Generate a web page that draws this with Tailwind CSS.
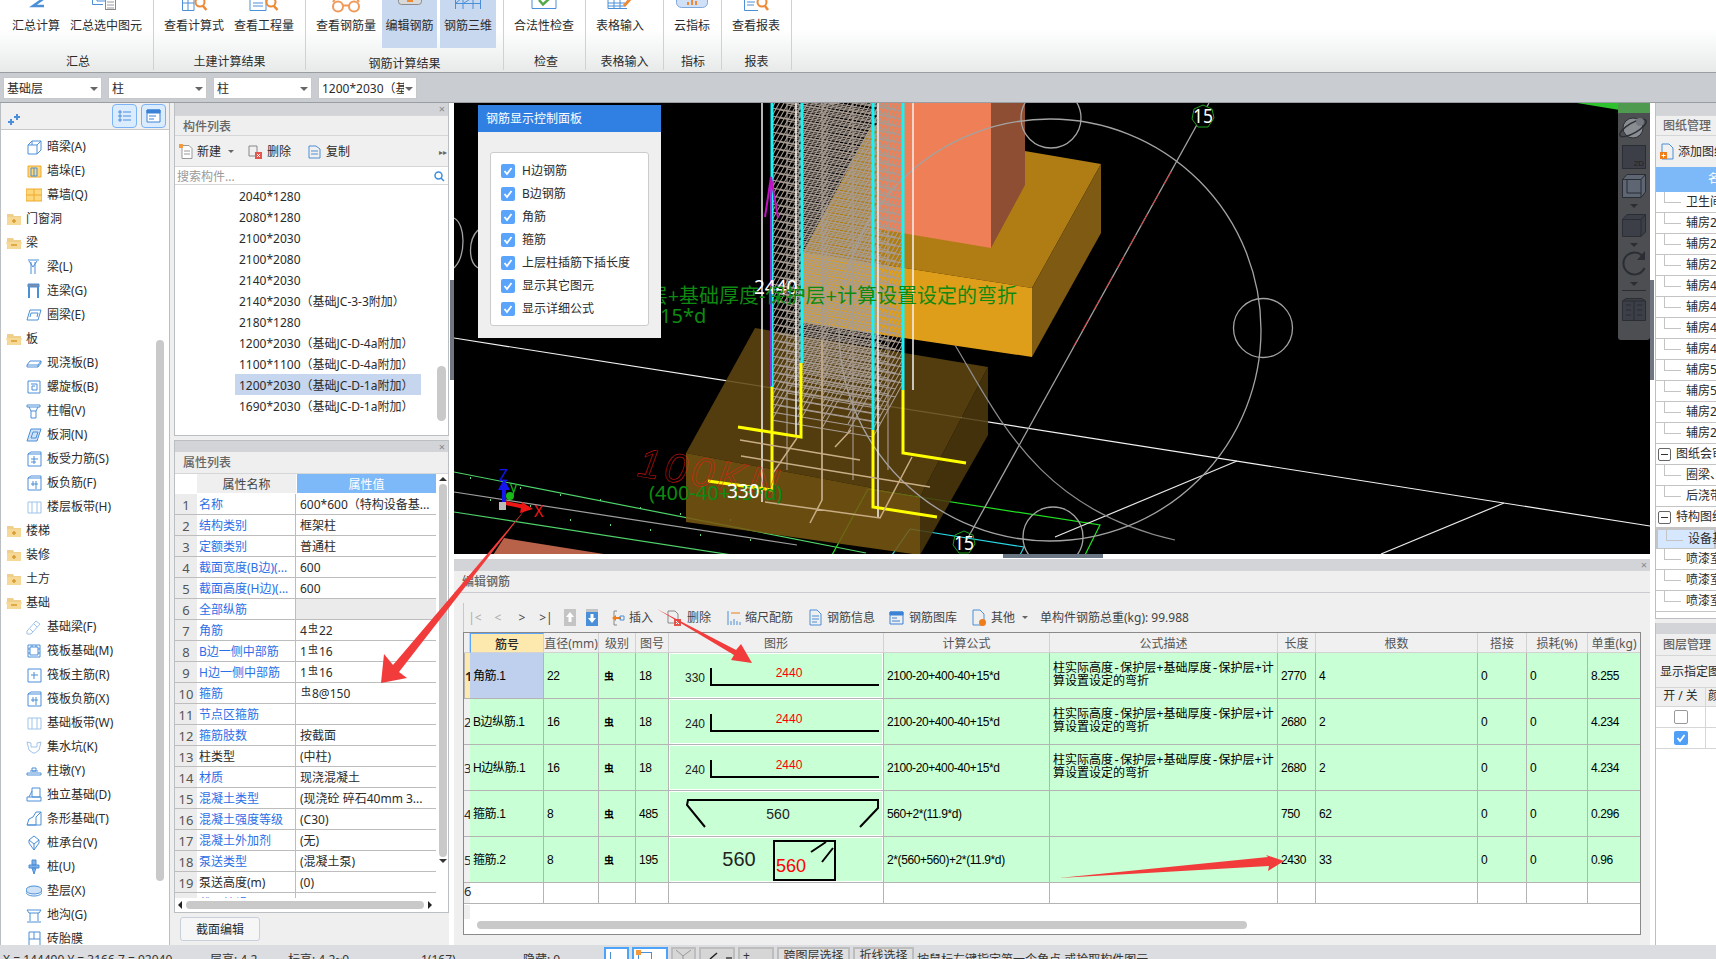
<!DOCTYPE html>
<html lang="zh">
<head>
<meta charset="UTF-8" />
<title>钢筋三维</title>
<script src="https://cdn.jsdelivr.net/npm/@tailwindcss/browser@4"></script>
</head>
<body class="bg-[#dfe0e3]">
<div class="relative w-[1716px] h-[959px] overflow-hidden flex flex-col text-[12px] leading-[16px] text-[#2b2b2b] font-['Noto_Sans','Noto_Sans_CJK_SC',sans-serif]">

  <!-- Ribbon -->
  <header class="h-[73px] flex bg-linear-to-b from-white from-40% to-[#e8eaea] border-b border-[#9a9da2] shrink-0">
    <div class="w-[154px] h-[70px] border-r border-[#cfd2d4] flex flex-col">
      <div class="h-[48px] flex pl-[1px]">
        <div class="w-[70px] flex flex-col items-center"><svg class="w-[30px] h-[18px] shrink-0" viewBox="0 0 30 18" fill="none"><path d="M6 -5H22V-1L12 6H23" stroke="#4a8fd8" stroke-width="2.5"/></svg><span>汇总计算</span></div>
        <div class="w-[70px] flex flex-col items-center"><svg class="w-[30px] h-[18px] shrink-0" viewBox="0 0 30 18" fill="none" stroke="#4a8fd8"><path d="M1.5 -5V4.500H12M6 -3V1H14"/><rect x="14.500" y="-2" width="10" height="11.500" stroke="#888" fill="#fff"/><path d="M16 2h7M16 5h7M16 8h7" stroke="#999"/></svg><span class="whitespace-nowrap">汇总选中图元</span></div>
      </div>
      <div class="mt-[8px] text-center pl-[3px]">汇总</div>
    </div>
    <div class="w-[152px] h-[70px] border-r border-[#cfd2d4] flex flex-col">
      <div class="h-[48px] flex pl-[5px]">
        <div class="w-[70px] flex flex-col items-center"><svg class="w-[30px] h-[18px] shrink-0" viewBox="0 0 30 18" fill="none"><path d="M3.500 -3V10.500H15V-3M9 -3V10.500M3.500 3H15" stroke="#4a8fd8"/><circle cx="21" cy="2" r="4.500" stroke="#ee8a35" stroke-width="2"/><path d="M24 6l3.500 4" stroke="#ee8a35" stroke-width="2.500"/></svg><span>查看计算式</span></div>
        <div class="w-[70px] flex flex-col items-center"><svg class="w-[30px] h-[18px] shrink-0" viewBox="0 0 30 18" fill="none"><path d="M1 -3V10.500H17V-3M4 3H14M4 6H14" stroke="#4a8fd8"/><circle cx="22" cy="2" r="4.500" stroke="#ee8a35" stroke-width="2"/><path d="M25 6l3.500 4" stroke="#ee8a35" stroke-width="2.500"/></svg><span>查看工程量</span></div>
      </div>
      <div class="mt-[8px] text-center">土建计算结果</div>
    </div>
    <div class="w-[198px] h-[70px] border-r border-[#cfd2d4] flex flex-col">
      <div class="h-[48px] flex pl-[4px]">
        <div class="w-[72px] flex flex-col items-center"><svg class="w-[32px] h-[18px] shrink-0" viewBox="0 0 32 18" fill="none" stroke="#ef9a5b" stroke-width="2"><circle cx="8" cy="6.500" r="5"/><circle cx="24" cy="6.500" r="5"/><path d="M13 5.500h6M3 2L5 -1M29 2L27 -1"/></svg><span>查看钢筋量</span></div>
        <div class="w-[55px] h-[48px] bg-[#c8d8ef] flex flex-col items-center"><svg class="w-[30px] h-[18px] shrink-0" viewBox="0 0 30 18" fill="none"><rect x="3.500" y="-6" width="23" height="10.500" rx="3" stroke="#8b8b8b" fill="#d9d9d9"/><path d="M12 1h6" stroke="#ee8a35" stroke-width="2"/></svg><span>编辑钢筋</span></div>
        <div class="ml-[3px] w-[56px] h-[48px] bg-[#c8d8ef] flex flex-col items-center"><svg class="w-[30px] h-[18px] shrink-0" viewBox="0 0 30 18" fill="none" stroke="#4a8fd8"><path d="M2.500 -2V9M27.500 -2V9M2.500 3.500H27.500M10 -2V9M20 -2V9M3 3L9 -2M11 3L19 -2"/></svg><span>钢筋三维</span></div>
      </div>
      <div class="mt-[8px] text-center">钢筋计算结果</div>
    </div>
    <div class="w-[82px] h-[70px] border-r border-[#cfd2d4] flex flex-col">
      <div class="h-[48px] flex flex-col items-center pr-[1px]"><svg class="w-[30px] h-[18px] shrink-0" viewBox="0 0 30 18" fill="none"><path d="M3 -2V8.500H27V-2" stroke="#4a8fd8"/><path d="M10 0L14 4.500L21 -2" stroke="#55a84a" stroke-width="2.500"/></svg><span>合法性检查</span></div>
      <div class="mt-[8px] text-center pl-[3px]">检查</div>
    </div>
    <div class="w-[78px] h-[70px] border-r border-[#cfd2d4] flex flex-col">
      <div class="h-[48px] w-[68px] flex flex-col items-center"><svg class="w-[30px] h-[18px] shrink-0" viewBox="0 0 30 18" fill="none"><path d="M3 -2V8.500H22M3 3H20M3 6H20M9 -2V8.500M15 -2V8.500" stroke="#4a8fd8"/><path d="M19 6L27 -3" stroke="#ee8a35" stroke-width="3"/></svg><span>表格输入</span></div>
      <div class="mt-[8px] text-center">表格输入</div>
    </div>
    <div class="w-[58px] h-[70px] border-r border-[#cfd2d4] flex flex-col">
      <div class="h-[48px] w-[56px] flex flex-col items-center"><svg class="w-[32px] h-[18px] shrink-0" viewBox="0 0 32 18" fill="none"><rect x="0.500" y="-7" width="31" height="14.500" rx="5" fill="#cfe0f7" stroke="#7ea9dd"/><path d="M12 5V2M16 5V-2M20 5V1" stroke="#ee8a35" stroke-width="2"/></svg><span>云指标</span></div>
      <div class="mt-[8px] text-center pl-[1px]">指标</div>
    </div>
    <div class="w-[70px] h-[70px] border-r border-[#cfd2d4] flex flex-col">
      <div class="h-[48px] w-[68px] flex flex-col items-center"><svg class="w-[30px] h-[18px] shrink-0" viewBox="0 0 30 18" fill="none"><path d="M3.500 -3V10.500H17M6 2H14M6 5H13" stroke="#4a8fd8"/><circle cx="21" cy="2" r="4.500" stroke="#ee8a35" stroke-width="2"/><path d="M24 6l3 4" stroke="#ee8a35" stroke-width="2.500"/></svg><span>查看报表</span></div>
      <div class="mt-[8px] text-center">报表</div>
    </div>
  </header>

  <!-- Selectors -->
  <div class="h-[30px] shrink-0 bg-[#c9ccd1] border-b border-[#9a9da2] flex gap-[6px] pl-[3px] pt-[4px]">
    <div class="w-[99px] h-[22px] bg-white border border-[#c6c8ca] flex items-center justify-between px-[3px] pt-[1px]"><span>基础层</span><span class="w-0 h-0 border-x-[4px] border-x-transparent border-t-[4px] border-t-[#666]"></span></div>
    <div class="w-[99px] h-[22px] bg-white border border-[#c6c8ca] flex items-center justify-between px-[3px] pt-[1px]"><span>柱</span><span class="w-0 h-0 border-x-[4px] border-x-transparent border-t-[4px] border-t-[#666]"></span></div>
    <div class="w-[99px] h-[22px] bg-white border border-[#c6c8ca] flex items-center justify-between px-[3px] pt-[1px]"><span>柱</span><span class="w-0 h-0 border-x-[4px] border-x-transparent border-t-[4px] border-t-[#666]"></span></div>
    <div class="w-[99px] h-[22px] bg-white border border-[#c6c8ca] flex items-center justify-between px-[3px] pt-[1px] overflow-hidden"><span class="whitespace-nowrap w-[82px] overflow-hidden">1200*2030&#65288;基础</span><span class="w-0 h-0 border-x-[4px] border-x-transparent border-t-[4px] border-t-[#666]"></span></div>
  </div>

  <!-- Main -->
  <main class="h-[842px] flex bg-[#efefef]">

    <!-- Module tree -->
    <aside class="relative w-[170px] shrink-0 bg-white border-x border-[#bcbfc2] overflow-hidden">
      <div class="h-[27px] bg-[#f0f0f0] border-b border-[#c8c8c8] flex items-center pl-[6px]">
        <svg class="w-[14px] h-[14px] mt-[6px]" viewBox="0 0 14 14" fill="#4a8fd8"><path d="M3 7h2v2h2v2H5v2H3v-2H1V9h2zM9 2h2v2h2v2h-2v2H9V6H7V4h2z"/></svg>
        <div class="ml-[91px] w-[25px] h-[24px] rounded-[4px] border border-[#7ab3f5] bg-[#dcecff] flex items-center justify-center"><svg class="w-[14px] h-[14px]" viewBox="0 0 14 14" fill="none" stroke="#4a8fd8"><path d="M1 2h2v2H1zM1 6h2v2H1zM1 10h2v2H1zM5 3h8M5 7h8M5 11h8"/></svg></div>
        <div class="ml-[4px] w-[25px] h-[24px] rounded-[4px] border border-[#7ab3f5] bg-[#dcecff] flex items-center justify-center"><svg class="w-[15px] h-[14px]" viewBox="0 0 15 14" fill="none" stroke="#3b82d6"><path d="M1 1h13v12H1z" fill="#fff"/><path d="M1 1h13v3H1z" fill="#3b82d6"/><path d="M3 7h7M3 10h5"/></svg></div>
      </div>
      <div id="tree" class="pt-[5px]"></div>
      <div class="absolute left-[155px] top-[237px] w-[8px] h-[541px] rounded-full bg-[#c9c9c9]"></div>
    </aside>

    <div class="w-[4px] shrink-0"></div>

    <!-- Component + attribute lists -->
    <section class="w-[275px] shrink-0 flex flex-col">
      <div class="h-[333px] border border-t-0 border-[#bcbfc2] bg-white relative overflow-hidden">
        <div class="h-[12px] bg-[#d2d4d8] flex items-center justify-end pr-[3px] text-[11px] leading-[12px] text-[#888]">×</div>
        <div class="h-[21px] bg-[#efefef] border-y border-[#d4d6d8] pl-[8px] text-[#666] font-medium leading-[22px]">构件列表</div>
        <div class="h-[30px] bg-[#f0f0f0] flex items-center relative pt-[1px]">
          <svg class="ml-[4px] w-[14px] h-[15px]" viewBox="0 0 14 15" fill="none" stroke="#999"><path d="M3 1.500h7l3 3v10H3z" fill="#fff"/><path d="M5 7h6M5 10h6"/><path d="M0 0h4v4H0z" fill="#f59a3c" stroke="none"/></svg>
          <span class="ml-[4px] w-[25px]">新建</span><span class="ml-[6px] w-0 h-0 border-x-[3px] border-x-transparent border-t-[3px] border-t-[#666]"></span>
          <svg class="ml-[14px] w-[14px] h-[14px]" viewBox="0 0 14 14" fill="none" stroke="#888"><path d="M1 1h8v10H1z"/><path d="M7 7h7v7H7z" fill="#e2564d" stroke="none"/><path d="M9 9l3 3M12 9l-3 3" stroke="#fff"/></svg>
          <span class="ml-[5px] w-[25px]">删除</span>
          <svg class="ml-[16px] w-[13px] h-[14px]" viewBox="0 0 13 14" fill="none" stroke="#4a8fd8"><path d="M1 1h7l4 3v9H1z"/><path d="M3 6h7M3 9h7"/></svg>
          <span class="ml-[5px]">复制</span>
          <span class="absolute right-[1px] text-[8px] text-[#666]">▸▸</span>
        </div>
        <div class="h-[19px] border-y border-[#d4d6d8] flex items-center justify-between px-[2px] text-[#9a9a9a] pt-[2px]"><span>搜索构件...</span><svg class="w-[11px] h-[11px] mr-[1px]" viewBox="0 0 11 11" fill="none" stroke="#3a8ee0" stroke-width="1.500"><circle cx="4.500" cy="4.500" r="3.500"/><path d="M7 7l3 3"/></svg></div>
        <div id="parts"></div>
        <div class="absolute left-[262px] top-[263px] w-[9px] h-[55px] rounded-full bg-[#c9c9c9]"></div>
      </div>
      <div class="h-[4px] shrink-0"></div>
      <div class="h-[473px] border border-[#bcbfc2] bg-white relative overflow-hidden">
        <div class="h-[11px] bg-[#d2d4d8] flex items-center justify-end pr-[3px] text-[11px] leading-[11px] text-[#888]">×</div>
        <div class="h-[22px] bg-[#efefef] border-b border-[#d4d6d8] pl-[8px] text-[#666] font-medium leading-[22px]">属性列表</div>
        <div class="flex h-[20px] border-b border-white">
          <div class="w-[22px]"></div>
          <div class="w-[99px] bg-[#efefef] text-center leading-[21px] text-[#444]">属性名称</div>
          <div class="w-[139px] bg-[#7db9f8] text-center leading-[21px] text-white ml-[1px]">属性值</div>
        </div>
        <div id="attrs" class="w-[261px] h-[405px] overflow-hidden"></div>
        <div class="absolute left-[262px] top-[33px] w-[12px] h-[392px] flex flex-col items-center">
          <span class="w-0 h-0 mt-[3px] border-x-[4px] border-x-transparent border-b-[4px] border-b-[#333]"></span>
          <span class="mt-[3px] w-[8px] h-[373px] rounded-full bg-[#c9c9c9]"></span>
          <span class="w-0 h-0 mt-[2px] border-x-[4px] border-x-transparent border-t-[4px] border-t-[#333]"></span>
        </div>
        <div class="absolute left-0 bottom-0 w-[273px] h-[14px] bg-white flex items-center pl-[3px]">
          <span class="w-0 h-0 border-y-[4px] border-y-transparent border-r-[4px] border-r-[#222]"></span>
          <span class="ml-[4px] w-[238px] h-[8px] rounded-full bg-[#c9c9c9]"></span>
          <span class="ml-[4px] w-0 h-0 border-y-[4px] border-y-transparent border-l-[4px] border-l-[#222]"></span>
        </div>
      </div>
      <div class="flex-1 pl-[6px] pt-[4px]"><div class="w-[80px] h-[24px] rounded-[3px] border border-[#c8d0dc] bg-[#f6f6f6] text-center leading-[23px]">截面编辑</div></div>
    </section>

    <div class="relative w-[5px] shrink-0 bg-white"><div class="absolute left-[1px] top-[177px] w-[4px] h-[100px] bg-[#6f7681]"></div></div>

    <!-- Centre: 3D viewport and rebar table -->
    <section class="w-[1196px] shrink-0 flex flex-col">
      <div class="relative h-[451px] bg-black overflow-hidden">
        <svg class="absolute inset-0 w-[1196px] h-[451px]" viewBox="454 103 1196 451" fill="none" font-family="'Noto Sans','Noto Sans CJK SC',sans-serif">
          <defs>
            <path id="stirrup" d="M772 420L802 367L903 383L873 437ZM787 393L888 410M853 375L822 428M780 406L881 423M795 380L896 397M828 372L798 424M878 379L848 432"/>
          </defs>
          <path d="M1577 103H1650V115Z" fill="#2fc22f"/>
          <path d="M493 555L504 538L610 555Z" fill="#b8624a"/>
          <!-- ground lines -->
          <g stroke-width="1.200">
            <path d="M454 338L1650 526" stroke="#f2f2f2"/>
            <path d="M454 472L866 553" stroke="#4fd36a"/>
            <path d="M454 512L732 555" stroke="#4fd36a"/>
            <path d="M454 492L797 545" stroke="#9f9f9f"/>
            <path d="M868 489L1100 525L1085 555M868 489L832 555" stroke="#22e022"/>
            <path d="M910 529L1024 547L1020 555M910 529L892 555" stroke="#29d8e6"/>
            <path d="M1237 461L1055 537M1504 503L1381 554" stroke="#e8e8e8"/>
          </g>
          <path d="M470 478h1M490 500h1M520 488h1M530 506h1M560 495h1M570 520h1M600 500h1M610 525h1M640 508h1M650 530h1M680 514h1M700 535h1M730 520h1M750 540h1" stroke="#5fd97a" stroke-width="2"/>
          <!-- lower footing -->
          <g fill-opacity="0.880">
            <path d="M755 328L988 367L920 497L686 453Z" fill="#5f4611"/>
            <path d="M686 453L920 497L920 555L686 522Z" fill="#785812"/>
            <path d="M920 497L988 367L988 435L920 555Z" fill="#4b380c"/>
          </g>
          <!-- upper footing -->
          <path d="M872 125L1101 164L1032 288L803 252Z" fill="#b07d14"/>
          <path d="M803 252L1032 288L1032 357L803 323Z" fill="#df9e1a"/>
          <path d="M1032 288L1101 164V233L1032 357Z" fill="#7f5a12"/>
          <!-- column -->
          <path d="M878 103H991V248L878 229Z" fill="#ee7f56"/>
          <path d="M991 103H1025V185L991 248Z" fill="#8e4e33"/>
          <!-- grid circles -->
          <g stroke="#a3a3a3" stroke-width="1.300">
            <circle cx="1050" cy="330" r="211"/>
            <circle cx="1051" cy="118" r="30"/>
            <circle cx="1263" cy="328" r="29.500"/>
            <circle cx="1053" cy="537" r="30"/>
            <path d="M454 218C466 224 466 256 454 268M478 230C468 240 468 262 478 268"/>
            <path d="M1209 103L965 543"/>
          </g>
          <path d="M1171 172L1073 347" stroke="#e02020" stroke-width="0.800" stroke-dasharray="14 10"/>
          <path d="M955 345C1000 420 1040 510 1175 540" stroke="#8d8d8d" stroke-width="1.200"/>
          <!-- rebar cage: one stirrup every 8px up the column -->
          <g stroke="#a89c92" stroke-width="1.100">
            <path d="M787 103V470M822 103V500M853 103V480M888 103V470"/>
            <use href="#stirrup"/><use href="#stirrup" y="-8"/><use href="#stirrup" y="-16"/><use href="#stirrup" y="-24"/><use href="#stirrup" y="-32"/><use href="#stirrup" y="-40"/><use href="#stirrup" y="-48"/><use href="#stirrup" y="-56"/>
            <use href="#stirrup" y="-64"/><use href="#stirrup" y="-72"/><use href="#stirrup" y="-80"/><use href="#stirrup" y="-88"/><use href="#stirrup" y="-96"/><use href="#stirrup" y="-104"/><use href="#stirrup" y="-112"/><use href="#stirrup" y="-120"/>
            <use href="#stirrup" y="-128"/><use href="#stirrup" y="-136"/><use href="#stirrup" y="-144"/><use href="#stirrup" y="-152"/><use href="#stirrup" y="-160"/><use href="#stirrup" y="-168"/><use href="#stirrup" y="-176"/><use href="#stirrup" y="-184"/>
            <use href="#stirrup" y="-192"/><use href="#stirrup" y="-200"/><use href="#stirrup" y="-208"/><use href="#stirrup" y="-216"/><use href="#stirrup" y="-224"/><use href="#stirrup" y="-232"/><use href="#stirrup" y="-240"/><use href="#stirrup" y="-248"/>
            <use href="#stirrup" y="-256"/><use href="#stirrup" y="-264"/><use href="#stirrup" y="-272"/><use href="#stirrup" y="-280"/><use href="#stirrup" y="-288"/><use href="#stirrup" y="-296"/><use href="#stirrup" y="-304"/><use href="#stirrup" y="-312"/><use href="#stirrup" y="-320"/>
          </g>
          <path d="M762 103V502M796 103V437M878 103V518M913 103V390" stroke="#f2f2f2" stroke-width="1.500"/>
          <path d="M772 103V387M802 103V363M873 103V430M903 103V390" stroke="#18f4f6" stroke-width="3"/>
          <path d="M771 177V386" stroke="#a12fd8" stroke-width="2"/>
          <path d="M765 217L771 177L778 218" stroke="#c010c0" stroke-width="2"/>
          <path d="M738 427L801 437V363M708 481L772 490V387M873 430V507L937 517M903 390V453L966 463" stroke="#ffff00" stroke-width="3"/>
          <path d="M765 502L880 518L912 457M773 473L797 438M810 523L822 500V340M741 456L930 487M740 440L860 460M851 430L835 447" stroke="#c8ad86" stroke-width="1.500"/>
          <!-- labels -->
          <text x="754" y="294" fill="#fff" font-size="19">2440</text>
          <text x="1017" y="303" fill="#0e8a12" font-size="20" text-anchor="end">高度-保护层+基础厚度-保护层+计算设置设定的弯折</text>
          <text x="660" y="323" fill="#0e8a12" font-size="20">15*d</text>
          <text x="636" y="476" fill="none" stroke="#e01818" stroke-width="0.500" font-size="41" font-style="italic" font-family="'Liberation Sans',sans-serif" letter-spacing="4" transform="rotate(9 636 476)">100KN</text>
          <text x="649" y="500" fill="#0e8a12" font-size="20">(400-40+15*d)</text>
          <text x="727" y="498" fill="#fff" font-size="19">330</text>
          <path d="M1203 105L1212 109L1214 118L1208 127L1198 127L1192 119L1194 109Z" stroke="#1ea01e" fill="#000"/>
          <text x="1203" y="123" fill="#fff" font-size="20" text-anchor="middle" textLength="20" lengthAdjust="spacingAndGlyphs">15</text>
          <path d="M964 531L973 535L975 544L969 553L959 553L953 545L955 535Z" stroke="#1ea01e"/>
          <text x="964" y="550" fill="#fff" font-size="20" text-anchor="middle" textLength="20" lengthAdjust="spacingAndGlyphs">15</text>
          <!-- axes -->
          <path d="M504 505V488" stroke="#1515ee" stroke-width="4"/><path d="M504 479L510 490H498Z" fill="#1515ee"/>
          <path d="M506 503L525 507" stroke="#ee1515" stroke-width="4"/><path d="M533 509L520 513L522 502Z" fill="#ee1515"/>
          <circle cx="510" cy="496" r="4" fill="#17b817"/>
          <rect x="499" y="502" width="7" height="8" fill="#bbb"/>
          <text x="499" y="481" fill="#1515ee" font-size="16">Z</text>
          <text x="510" y="492" fill="#17b817" font-size="14">y</text>
          <text x="534" y="517" fill="#ee1515" font-size="16">X</text>
        </svg>

        <!-- rebar display panel -->
        <div class="absolute left-[24px] top-[2px] w-[183px] h-[233px] bg-[#efefef]">
          <div class="h-[27px] bg-[#2f80e2] text-white pl-[8px] leading-[27px]">钢筋显示控制面板</div>
          <div id="checks" class="ml-[12px] mt-[20px] w-[159px] h-[174px] bg-white border border-[#cccccc] rounded-[3px] pt-[9px] pl-[10px] flex flex-col gap-[5px]"></div>
        </div>

        <!-- view toolbar -->
        <svg class="absolute right-0 top-0 w-[32px] h-[237px]" viewBox="0 0 32 237" fill="none">
          <rect width="32" height="237" rx="3" fill="#4c4e51"/>
          <rect width="32" height="10" fill="#4e9a4e"/>
          <ellipse cx="15" cy="25" rx="10" ry="10" fill="#8a8d92" stroke="#2d3037"/>
          <ellipse cx="15" cy="25" rx="15" ry="5" transform="rotate(-30 15 25)" stroke="#2d3037" stroke-width="1.500"/>
          <circle cx="22" cy="19" r="4" fill="#74787e"/>
          <rect x="4.500" y="42.500" width="23" height="23" fill="#3c3f47" stroke="#2a2d33"/>
          <text x="26" y="63" fill="#222" font-size="8" text-anchor="end" font-family="'Liberation Sans',sans-serif">2D</text>
          <path d="M4.500 76.500L9 71.500H27.500V89L23 94.500H4.500ZM4.500 76.500H23V94.500M23 76.500L27.500 71.500" fill="#5d6672" stroke="#2a2d33"/>
          <path d="M9 76.500V90H23" stroke="#2a2d33"/>
          <path d="M12 101h8l-4 4z" fill="#2a2d33"/>
          <path d="M4.500 116.500L9 111.500H27.500V129L23 133.500H4.500ZM4.500 116.500H23V133.500M23 116.500L27.500 111.500" fill="#3c3f47" stroke="#2a2d33"/>
          <path d="M12 140h8l-4 4z" fill="#2a2d33"/>
          <path d="M26 155A11 11 0 1 0 26.500 165" stroke="#2a2d33" stroke-width="2"/><path d="M27 148V157H19Z" fill="#2a2d33"/>
          <path d="M12 179h8l-4 4z" fill="#2a2d33"/>
          <path d="M4 187.500H28" stroke="#2a2d33"/>
          <path d="M4.500 198L8 195.500H24L27.500 198V217.500H4.500ZM4.500 198H27.500M16 198V217.500M8 202h5M8 207h5M8 212h5M19 202h5M19 207h5M19 212h5" stroke="#2a2d33" fill="#3c3f47"/>
        </svg>
      </div>

      <div class="relative h-[5px] bg-white shrink-0"><div class="absolute left-[549px] top-0 w-[100px] h-[4px] bg-[#6b7685]"></div></div>

      <!-- Edit rebar -->
      <div class="flex-1 bg-[#efefef] flex flex-col overflow-hidden">
        <div class="h-[12px] bg-[#d2d4d8] flex items-center justify-end pr-[3px] text-[11px] leading-[12px] text-[#888]">×</div>
        <div class="h-[22px] border-b border-[#c9cbce] pl-[8px] text-[#666] font-medium leading-[22px]">编辑钢筋</div>
        <div class="h-[39px] flex items-end">
          <div class="ml-[9px] w-[1px] h-[29px] bg-[#c8c8c8]"></div>
          <div class="h-[30px] flex items-center text-[#444] pt-[1px]">
            <span class="w-[22px] text-center text-[#aaa]">|&lt;</span>
            <span class="w-[24px] text-center text-[#aaa]">&lt;</span>
            <span class="w-[24px] text-center">&gt;</span>
            <span class="w-[24px] text-center">&gt;|</span>
            <svg class="ml-[6px] w-[12px] h-[17px]" viewBox="0 0 12 17"><rect width="12" height="17" fill="#c4c4c4"/><path d="M6 3L10 8H7.500V13H4.500V8H2Z" fill="#fff"/></svg>
            <svg class="ml-[10px] w-[12px] h-[17px]" viewBox="0 0 12 17"><rect width="12" height="17" fill="#c4c4c4"/><rect y="3" width="12" height="14" fill="#4a8fd8"/><path d="M6 14L10 9H7.500V5H4.500V9H2Z" fill="#fff"/></svg>
            <svg class="ml-[13px] w-[14px] h-[16px]" viewBox="0 0 14 16" fill="none"><path d="M6 1h-3v14h3" stroke="#888"/><path d="M1 8l4-3v2h5v2H5v2z" fill="#ee7d1a"/><path d="M9 6h4v4H9z" stroke="#4a8fd8"/></svg>
            <span class="ml-[4px] w-[24px]">插入</span>
            <svg class="ml-[14px] w-[14px] h-[16px]" viewBox="0 0 14 16" fill="none"><path d="M1 1h7l3 3v9H1z" stroke="#888"/><path d="M7 9h7v7H7z" fill="#e2564d"/><path d="M9 11l3 3M12 11l-3 3" stroke="#fff"/></svg>
            <span class="ml-[6px] w-[26px]">删除</span>
            <svg class="ml-[14px] w-[14px] h-[16px]" viewBox="0 0 14 16" fill="none"><path d="M1 1V15M4 15v-4M7 15v-6M10 15v-4M13 15v-3" stroke="#4a8fd8"/><path d="M4 3h9" stroke="#ee7d1a"/></svg>
            <span class="ml-[4px] w-[48px]">缩尺配筋</span>
            <svg class="ml-[16px] w-[13px] h-[17px]" viewBox="0 0 13 17" fill="none" stroke="#4a8fd8"><path d="M1 1h7l4 4v11H1z"/><path d="M3 7h7M3 10h7M3 13h5"/></svg>
            <span class="ml-[5px] w-[48px]">钢筋信息</span>
            <svg class="ml-[14px] w-[15px] h-[14px]" viewBox="0 0 15 14" fill="none" stroke="#3b82d6"><path d="M1 1h13v12H1z"/><path d="M1 1h13v3H1z" fill="#3b82d6"/><path d="M3 7h5M3 10h8"/></svg>
            <span class="ml-[5px] w-[48px]">钢筋图库</span>
            <svg class="ml-[15px] w-[15px] h-[18px]" viewBox="0 0 15 18" fill="none"><path d="M1 1h7l4 4v11H1z" stroke="#4a8fd8"/><circle cx="10.500" cy="13.500" r="3.500" fill="#ee7d1a"/></svg>
            <span class="ml-[4px] w-[26px]">其他</span>
            <span class="ml-[5px] w-0 h-0 border-x-[3px] border-x-transparent border-t-[3px] border-t-[#666]"></span>
            <span class="ml-[12px] whitespace-nowrap">单构件钢筋总重(kg): 99.988</span>
          </div>
        </div>
        <div class="ml-[9px] w-[1178px] h-[303px] bg-white border border-[#8a8a8a] relative overflow-hidden">
          <div id="rebar" class="grid grid-cols-[6px_74px_55px_37px_33px_215px_166px_228px_38px_162px_49px_61px_53px] grid-rows-[20px_46px_46px_46px_46px_46px_21px]"></div>
          <div class="absolute left-[13px] top-[288px] w-[770px] h-[8px] rounded-full bg-[#c9c9c9]"></div>
          <div class="absolute left-0 top-[272px] w-[6px] h-[14px] bg-[#eeeeee]"></div>
        </div>
      </div>
    </section>

    <div class="relative w-[5px] shrink-0 bg-white"><div class="absolute left-0 top-[177px] w-[4px] h-[100px] bg-[#6f7681]"></div></div>

    <!-- Drawing + layer management -->
    <aside class="w-[61px] shrink-0 overflow-hidden flex flex-col">
      <div class="h-[516px] bg-white border-l border-b border-[#bcbfc2] overflow-hidden whitespace-nowrap">
        <div class="h-[12px] bg-[#d2d4d8]"></div>
        <div class="h-[21px] bg-[#efefef] border-y border-[#d4d6d8] pl-[7px] text-[#666] font-medium leading-[20px]">图纸管理</div>
        <div class="h-[31px] bg-[#f0f0f0] flex items-center pl-[4px]"><svg class="w-[14px] h-[17px] shrink-0" viewBox="0 0 14 17" fill="none"><path d="M2 1h7l4 4v11H2z" stroke="#4a8fd8"/><path d="M0 9h7v7H0z" fill="#ee7d1a"/><path d="M3.500 10.500v4M1.500 12.500h4" stroke="#fff"/></svg><span class="ml-[4px]">添加图纸</span></div>
        <div class="h-[25px] bg-[#7db9f8] text-white pl-[52px] leading-[24px]">名称</div>
        <div id="sheets"></div>
      </div>
      <div class="h-[4px] shrink-0"></div>
      <div class="flex-1 bg-white border-l border-[#bcbfc2] whitespace-nowrap">
        <div class="h-[11px] bg-[#d2d4d8]"></div>
        <div class="h-[22px] bg-[#efefef] border-b border-[#d4d6d8] pl-[7px] text-[#666] font-medium leading-[22px]">图层管理</div>
        <div class="h-[31px] bg-[#f0f0f0] flex items-center pl-[4px]">显示指定图层</div>
        <div class="h-[20px] flex border-y border-[#d4d6d8] bg-[#efefef]"><span class="w-[50px] shrink-0 text-center border-r border-[#d4d6d8]">开 / 关</span><span class="pl-[2px]">颜色</span></div>
        <div class="h-[21px] flex items-center border-b border-[#d4d6d8]"><span class="w-[50px] shrink-0 h-full border-r border-[#d4d6d8] flex items-center justify-center"><span class="w-[14px] h-[14px] rounded-[2px] border border-[#999] bg-white"></span></span></div>
        <div class="h-[21px] flex items-center border-b border-[#d4d6d8]"><span class="w-[50px] shrink-0 h-full border-r border-[#d4d6d8] flex items-center justify-center"><svg class="w-[14px] h-[14px]" viewBox="0 0 14 14"><rect width="14" height="14" rx="2" fill="#4f9ff7"/><path d="M3.500 7L6 10L10.500 4" stroke="#fff" stroke-width="1.800" fill="none"/></svg></span></div>
      </div>
    </aside>
  </main>

  <!-- Status bar -->
  <footer class="h-[14px] shrink-0 bg-[#dcdde0] relative flex items-start whitespace-nowrap text-[#333] overflow-hidden">
    <div class="w-[210px] pl-[3px] pt-[7px]">X = 144490 Y = 3166.7 = 92040</div>
    <div class="w-[78px] pt-[7px]">层高: 4.2</div>
    <div class="w-[133px] pt-[7px]">标高: 4.2~0</div>
    <div class="w-[102px] pt-[7px]">1(167)</div>
    <div class="w-[81px] pt-[7px]">隐藏: 0</div>
    <div class="w-[25px] h-[20px] mt-[2px] border-2 border-[#4da3f7] bg-white"><div class="ml-[4px] mt-[3px] w-[1px] h-[12px] bg-[#4a8fd8]"></div></div>
    <div class="ml-[3px] w-[36px] h-[20px] mt-[2px] border-2 border-[#4da3f7] bg-white relative"><div class="ml-[4px] mt-[3px] w-[14px] h-[12px] border border-[#4a8fd8]"></div><div class="absolute left-[2px] top-[1px] w-[5px] h-[5px] bg-[#f59a3c]"></div></div>
    <div class="ml-[3px] w-[25px] h-[20px] mt-[2px] border-2 border-[#bdbdbd] bg-[#d6d6d6]"><svg class="w-[21px] h-[10px]" viewBox="0 0 21 10" fill="none" stroke="#999"><path d="M3 1L10 7L18 1M10 7V10"/></svg></div>
    <div class="ml-[3px] w-[36px] h-[20px] mt-[2px] border-2 border-[#bdbdbd] bg-[#d6d6d6]"><svg class="w-[32px] h-[10px]" viewBox="0 0 32 10" fill="none" stroke="#222"><path d="M9 10L16 4" stroke-width="1.500"/><path d="M25 9h6" stroke="#666" stroke-width="2"/></svg></div>
    <div class="ml-[3px] w-[36px] h-[20px] mt-[2px] border-2 border-[#bdbdbd] bg-[#d6d6d6] pl-[3px] leading-[14px]">+</div>
    <div class="ml-[3px] w-[73px] h-[20px] mt-[2px] border-2 border-[#bdbdbd] bg-[#dfdfdf] text-center leading-[14px]">跨图层选择</div>
    <div class="ml-[3px] w-[61px] h-[20px] mt-[2px] border-2 border-[#bdbdbd] bg-[#dfdfdf] text-center leading-[14px]">折线选择</div>
    <div class="ml-[3px] pt-[7px]">按鼠标左键指定第一个角点,或拾取构件图元</div>
  </footer>

  <!-- Red annotation arrows drawn over the screenshot -->
  <svg class="absolute inset-0 w-[1716px] h-[959px] pointer-events-none" viewBox="0 0 1716 959" fill="#f23c3c">
    <path d="M528 506L399 672L407 678L381 683L384 654L393 665Z"/>
    <path d="M657 609L736 650L741 644L752 663L731 660L734 655Z"/>
    <path d="M1059 878L1268 857L1266 855L1284 861L1268 871L1269 866Z"/>
  </svg>
</div>

<script>
  // tree on the left: "+"/"-" = folder, otherwise a module with its icon
  const orange = 'stroke="#f0a92e" fill="#fdd77a"';
  const tree = [
    ["暗梁(A)", '<path d="M2 6l4-4h9v9l-4 4H2zM2 6h9v9M11 6l4-4M6 2v4"/>'],
    ["墙垛(E)", `<path d="M2 3h13v11H2z" ${orange}/><path d="M5 5h6v8H5zM8 5v8"/>`],
    ["幕墙(Q)", `<path d="M0 2h16v12H0zM0 8h16M8 2v12" ${orange}/>`],
    ["门窗洞", "+"],
    ["梁", "-"],
    ["梁(L)", '<path d="M2 1h11M3 2l4 6 4-6M5 3v12M9 3v12"/>'],
    ["连梁(G)", '<path d="M2 1h11v3H2z" fill="#7b8fa8"/><path d="M3 4v11M12 4v11" stroke-width="2"/>'],
    ["圈梁(E)", '<path d="M1 13l3-10h11l-3 10zM4 10l1-4h7l-1 4"/>'],
    ["板", "-"],
    ["现浇板(B)", '<path d="M1 10l3-4h11l-3 4zM1 10v2h11l3-4V6M12 10v2"/>'],
    ["螺旋板(B)", '<path d="M2 2h12v12H2zM5 5h6v6H6V7h3"/>'],
    ["柱帽(V)", '<path d="M1 2h13v2H1zM3 4l2 4h5l2-4M5 8v7h5V8"/>'],
    ["板洞(N)", '<path d="M1 14L5 2h10l-4 12zM5 11l2-6h5l-2 6z" fill="#cfe2f8"/>'],
    ["板受力筋(S)", '<path d="M2 3h13v12H2zM2 3l3-2h10v2M5 8h7M8 5v8M5 11h5"/>'],
    ["板负筋(F)", '<path d="M2 3h13v12H2zM2 3l3-2h10v2M5 9h7M7 6v5M10 6v8"/>'],
    ["楼层板带(H)", '<path d="M2 3h13v11H2zM6 3v11M11 3v11" stroke="#9fc3ea"/>'],
    ["楼梯", "+"],
    ["装修", "+"],
    ["土方", "+"],
    ["基础", "-"],
    ["基础梁(F)", '<path d="M1 12L10 2l4 3-9 10H1zM4 10l3 3M8 5l3 3" stroke="#9fc3ea"/>'],
    ["筏板基础(M)", '<path d="M2 2h12v12H2zM4 4h8v8H4zM2 6h2M2 10h2M12 6h2M12 10h2M6 2v2M10 2v2"/>'],
    ["筏板主筋(R)", '<path d="M2 2h13v13H2zM8 5v7M5 8h7"/>'],
    ["筏板负筋(X)", '<path d="M2 3h13v12H2zM2 3l3-2h10v2M5 9h7M7 6v5M10 6v8"/>'],
    ["基础板带(W)", '<path d="M2 3h13v11H2zM6 3v11M11 3v11" stroke="#9fc3ea"/>'],
    ["集水坑(K)", '<path d="M1 3l4 1v4h6V4l4-1M1 3l2 8 4 3h2l4-3 2-8" stroke="#9fc3ea"/>'],
    ["柱墩(Y)", '<path d="M6 5h4v3H6zM4 8h8M1 12h14v-2H1z"/>'],
    ["独立基础(D)", '<path d="M6 1h8v9H6zM1 10h14v4H1zM3 10l3-6"/>'],
    ["条形基础(T)", '<path d="M1 14l2-6 4-2 3-5h5v13zM1 14h9M10 14V6l5-5"/>'],
    ["桩承台(V)", '<path d="M8 1l5 4-5 4-5-4zM3 5v3l5 7 5-7V5M8 9v6"/>'],
    ["桩(U)", '<path d="M6 1h4v5H6zM3 6h10v3H3zM6 9h4l-2 6z" fill="#7fb0e6"/>'],
    ["垫层(X)", '<ellipse cx="8" cy="7" rx="8" ry="4" fill="#cfe2f8"/><path d="M0 7v2c0 2 3 4 8 4s8-2 8-4V7"/>'],
    ["地沟(G)", '<path d="M1 3h14l-2 3H3zM4 6v8M12 6v8M1 15h14"/>'],
    ["砖胎膜", '<path d="M3 1h11v15H3zM3 8h11M8 1v7"/>']
  ];
  const folder = (open) => `<svg class="w-[16px] h-[14px] shrink-0" viewBox="0 0 16 14"><path d="M1 2h6l1 2h7v9H1z" fill="#f0cf8a"/><path d="${open ? "M0 6h16l-2 7H2z" : "M1 5h14v8H1z"}" fill="#f6d996"/><path d="${open ? "M5 9h6" : "M8 7v4M6 9h4"}" stroke="#d99b2b" stroke-width="1.500"/></svg>`;
  document.getElementById("tree").innerHTML = tree.map(([name, icon]) => {
    if (icon === "+" || icon === "-") {
      return `<div class="h-[24px] flex items-center pl-[5px] gap-[4px]">${folder(icon === "-")}<span>${name}</span></div>`;
    }
    return `<div class="h-[24px] flex items-center pl-[25px] gap-[5px]"><svg class="w-[16px] h-[16px] shrink-0" viewBox="0 0 16 16" fill="none" stroke="#4a8fd8">${icon}</svg><span>${name}</span></div>`;
  }).join("");

  const parts = ["2040*1280", "2080*1280", "2100*2030", "2100*2080", "2140*2030", "2140*2030&#65288;基础JC-3-3附加&#65289;", "2180*1280", "1200*2030&#65288;基础JC-D-4a附加&#65289;", "1100*1100&#65288;基础JC-D-4a附加&#65289;", "1200*2030&#65288;基础JC-D-1a附加&#65289;", "1690*2030&#65288;基础JC-D-1a附加&#65289;"];
  document.getElementById("parts").innerHTML = parts.map((p, i) =>
    `<div class="ml-[60px] w-[186px] h-[21px] pl-[4px] leading-[23px] whitespace-nowrap ${i === 9 ? "bg-[#c5d6ee]" : ""}">${p}</div>`
  ).join("");

  const g = '<span class="relative top-[-3px] text-[10px] mx-[1px]">虫</span>';
  const attrs = [
    ["名称", "600*600&#65288;特构设备基...", 1], ["结构类别", "框架柱", 1], ["定额类别", "普通柱", 1],
    ["截面宽度(B边)(...", "600", 1], ["截面高度(H边)(...", "600", 1], ["全部纵筋", "", 1],
    ["角筋", `4${g}22`, 1], ["B边一侧中部筋", `1${g}16`, 1], ["H边一侧中部筋", `1${g}16`, 1],
    ["箍筋", `${g}8@150`, 1], ["节点区箍筋", "", 1], ["箍筋肢数", "按截面", 1],
    ["柱类型", "(中柱)", 0], ["材质", "现浇混凝土", 1], ["混凝土类型", "(现浇砼 碎石40mm 3...", 1],
    ["混凝土强度等级", "(C30)", 1], ["混凝土外加剂", "(无)", 1], ["泵送类型", "(混凝土泵)", 1],
    ["泵送高度(m)", "(0)", 0], ["截面编辑", "", 1]
  ];
  document.getElementById("attrs").innerHTML = attrs.map(([k, v, link], i) =>
    `<div class="flex h-[21px] leading-[22px] border-b border-[#bdbdbd]">
       <div class="w-[22px] shrink-0 bg-[#ececec] text-center text-[#555] text-[13px]">${i + 1}</div>
       <div class="w-[99px] shrink-0 pl-[2px] border-r border-[#bdbdbd] whitespace-nowrap overflow-hidden ${link ? "text-[#2b6fe6]" : ""}">${k}</div>
       <div class="flex-1 pl-[4px] whitespace-nowrap overflow-hidden ${i === 5 ? "bg-[#ebebeb]" : ""}">${v}</div>
     </div>`
  ).join("");

  document.getElementById("checks").innerHTML = ["H边钢筋", "B边钢筋", "角筋", "箍筋", "上层柱插筋下插长度", "显示其它图元", "显示详细公式"].map(t =>
    `<div class="h-[18px] flex items-center gap-[7px]"><svg class="w-[14px] h-[14px] shrink-0" viewBox="0 0 14 14"><rect width="14" height="14" rx="2" fill="#5aa5fb"/><path d="M3.500 7L6 10L10.500 4" stroke="#fff" stroke-width="1.800" fill="none"/></svg><span>${t}</span></div>`
  ).join("");

  // rebar table
  const desc = "柱实际高度-保护层+基础厚度-保护层+计<br>算设置设定的弯折";
  const lshape = (h) => `<svg class="absolute inset-[1px]" width="213" height="44" viewBox="1 1 213 44" fill="none" font-family="'Liberation Sans',sans-serif"><path d="M42 15V32H210" stroke="#000" stroke-width="2"/><text x="26" y="29" fill="#222" font-size="12" text-anchor="middle">${h}</text><text x="120" y="24" fill="#f00" font-size="12" text-anchor="middle">2440</text></svg>`;
  const hook = `<svg class="absolute inset-[1px]" width="213" height="44" viewBox="1 1 213 44" fill="none" font-family="'Liberation Sans',sans-serif"><path d="M36 36L18 14L19 9H209V17L191 36" stroke="#000" stroke-width="2"/><text x="109" y="28" fill="#222" font-size="14" text-anchor="middle">560</text></svg>`;
  const box = `<svg class="absolute inset-[1px]" width="213" height="44" viewBox="1 1 213 44" fill="none" font-family="'Liberation Sans',sans-serif"><rect x="105" y="4" width="61" height="39" stroke="#000" stroke-width="2"/><path d="M142 15L157 5M153 25L164 11" stroke="#000" stroke-width="2"/><text x="70" y="29" fill="#222" font-size="20" text-anchor="middle">560</text><text x="122" y="35" fill="#f00" font-size="18" text-anchor="middle">560</text></svg>`;
  const rows = [
    ["角筋.1", "22", "18", lshape(330), "2100-20+400-40+15*d", desc, "2770", "4", "0", "0", "8.255"],
    ["B边纵筋.1", "16", "18", lshape(240), "2100-20+400-40+15*d", desc, "2680", "2", "0", "0", "4.234"],
    ["H边纵筋.1", "16", "18", lshape(240), "2100-20+400-40+15*d", desc, "2680", "2", "0", "0", "4.234"],
    ["箍筋.1", "8", "485", hook, "560+2*(11.9*d)", "", "750", "62", "0", "0", "0.296"],
    ["箍筋.2", "8", "195", box, "2*(560+560)+2*(11.9*d)", "", "2430", "33", "0", "0", "0.96"]
  ];
  const head = ["", "筋号", "直径(mm)", "级别", "图号", "图形", "计算公式", "公式描述", "长度", "根数", "搭接", "损耗(%)", "单重(kg)"];
  const num = "font-['Liberation_Sans','Noto_Sans_CJK_SC',sans-serif] tracking-[-0.4px] text-black pl-[3px]";
  let html = head.map((h, i) =>
    `<div class="text-center leading-[21px] whitespace-nowrap overflow-hidden border-r border-b border-[#d2d2d2] ${i === 1 ? "bg-[#fde9ae] border-l border-t border-l-[#5aa5fb] border-t-[#5aa5fb] font-medium" : "bg-[#f0f0f0] text-[#555]"}">${h}</div>`
  ).join("");
  const cell = "bg-[#c9ffd4] border-r border-b border-[#b4b4b4] flex items-center overflow-hidden";
  rows.forEach((r, i) => {
    html += `<div class="bg-[#f0f0f0] border-b border-[#b4b4b4] flex items-center text-[13px] ${i === 0 ? "font-bold bg-[#fde9ae] border-l border-[#5aa5fb]" : ""}">${i + 1}</div>`;
    html += `<div class="${i === 0 ? "bg-[#bfd0ee]" : "bg-[#c9ffd4]"} border-r border-b border-[#b4b4b4] flex items-center overflow-hidden whitespace-nowrap ${num}">${r[0]}</div>`;
    html += `<div class="${cell} ${num}">${r[1]}</div>`;
    html += `<div class="${cell} pl-[5px] text-black text-[10px] font-bold">虫</div>`;
    html += `<div class="${cell} ${num}">${r[2]}</div>`;
    html += `<div class="relative ${cell} bg-white"><div class="absolute inset-[1px] bg-[#c9ffd4]"></div>${r[3]}</div>`;
    html += `<div class="${cell} ${num} whitespace-nowrap">${r[4]}</div>`;
    html += `<div class="${cell} text-black pl-[3px] leading-[13px] text-[12px] font-['Liberation_Mono','Noto_Sans_CJK_SC',monospace]"><div>${r[5]}</div></div>`;
    html += `<div class="${cell} ${num}">${r[6]}</div>`;
    html += `<div class="${cell} ${num}">${r[7]}</div>`;
    html += `<div class="${cell} ${num}">${r[8]}</div>`;
    html += `<div class="${cell} ${num}">${r[9]}</div>`;
    html += `<div class="${cell} ${num}">${r[10]}</div>`;
  });
  html += head.map((_, i) =>
    `<div class="border-b border-[#b4b4b4] ${i === 0 ? "bg-[#f0f0f0] text-[13px]" : "border-r"}">${i === 0 ? "6" : ""}</div>`
  ).join("");
  document.getElementById("rebar").innerHTML = html;

  // sheet list on the right
  const sheets = ["卫生间", "辅房2层", "辅房2层", "辅房2层", "辅房4层", "辅房4层", "辅房4层", "辅房4层", "辅房5层", "辅房5层", "辅房2层", "辅房2层", "*图纸会审", "圈梁、构造柱", "后浇带", "*特构图纸", "设备基础", "喷漆室", "喷漆室", "喷漆室"];
  document.getElementById("sheets").innerHTML = sheets.map((s, i) => {
    if (s[0] === "*") {
      return `<div class="h-[21px] flex items-center border-b border-[#c4c4c4] pl-[2px]"><span class="w-[13px] h-[13px] border border-[#666] rounded-[2px] flex items-center justify-center shrink-0"><span class="w-[7px] h-[1px] bg-[#333]"></span></span><span class="ml-[5px]">${s.slice(1)}</span></div>`;
    }
    const selected = s === "设备基础";
    return `<div class="relative h-[21px] flex items-center border-b border-[#c4c4c4] pl-[30px] ${selected ? "bg-[#d6e8ff] border-2 border-[#888]" : ""}"><span class="absolute left-[8px] top-0 w-[1px] h-[11px] bg-[#c4c4c4]"></span><span class="absolute left-[8px] top-[10px] w-[17px] h-[1px] bg-[#c4c4c4]"></span><span>${s}</span></div>`;
  }).join("");
</script>
</body>
</html>
